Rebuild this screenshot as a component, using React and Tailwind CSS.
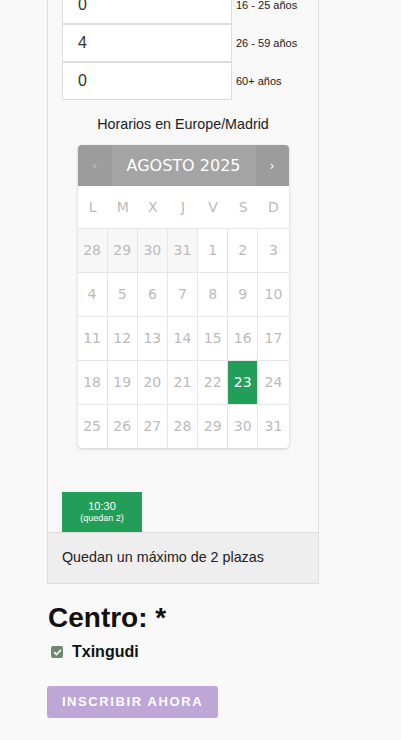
import React from 'react';

const cal = "'DejaVu Sans', Verdana, sans-serif";
const sans = "'Liberation Sans', Arial, sans-serif";

const ages = [
  { value: '0', label: '16 - 25 años' },
  { value: '4', label: '26 - 59 años' },
  { value: '0', label: '60+ años' },
];

const weeks = [
  [28, 29, 30, 31, 1, 2, 3],
  [4, 5, 6, 7, 8, 9, 10],
  [11, 12, 13, 14, 15, 16, 17],
  [18, 19, 20, 21, 22, 23, 24],
  [25, 26, 27, 28, 29, 30, 31],
];

const dow = ['L', 'M', 'X', 'J', 'V', 'S', 'D'];

const App = () => {
  return (
    <main className="flow-root min-h-screen bg-[#f9f9f9] text-[#222]" style={{ fontFamily: sans }}>
      {/* Panel de reserva */}
      <section className="-mt-[15px] ml-[47px] w-[272px] border border-[#dddddd] bg-[#f8f8f8]">
        <div className="px-[14px]">
          {ages.map((a, i) => (
            <div key={i} className="flex items-center">
              <input
                readOnly
                value={a.value}
                className="h-[38px] w-[170px] border border-[#dddddd] bg-white pl-[15px] text-[16px] text-[#333] outline-none"
                style={{ fontFamily: sans }}
              />
              <span className="ml-[4px] text-[11px] text-[#222]">{a.label}</span>
            </div>
          ))}
        </div>

        <p className="mt-[14px] text-center text-[14.3px] leading-[20px] text-[#222]">Horarios en Europe/Madrid</p>

        {/* Calendario */}
        <div
          className="mx-auto mt-[11px] w-[211px] overflow-hidden rounded-[4px] bg-white shadow-[0_1px_3px_rgba(0,0,0,0.18)]"
          style={{ fontFamily: cal }}
        >
          <div className="flex h-[41px] bg-[#9c9c9c] text-white">
            <div className="flex w-[34px] items-center justify-center text-[13px] text-[#c4c4c4]">‹</div>
            <div className="flex flex-1 items-center justify-center bg-[#a4a4a4] text-[16px]">AGOSTO 2025</div>
            <div className="flex w-[33px] items-center justify-center text-[13px]">›</div>
          </div>
          <div className="grid h-[43px] grid-cols-7 border-b border-[#e6e6e6]">
            {dow.map((d) => (
              <div key={d} className="flex items-center justify-center text-[14px] text-[#bbbbbb]">{d}</div>
            ))}
          </div>
          {weeks.map((w, r) => (
            <div key={r} className={`grid grid-cols-7 ${r < 4 ? 'h-[44px] border-b border-[#e6e6e6]' : 'h-[43px]'}`}>
              {w.map((d, c) => {
                const prev = r === 0 && c < 4;
                const sel = r === 3 && d === 23;
                return (
                  <div
                    key={c}
                    className={`flex items-center justify-center text-[14px] ${c < 6 ? 'border-r border-[#e6e6e6]' : ''} ${
                      sel ? 'bg-[#229e58] text-white' : prev ? 'bg-[#f7f7f7] text-[#bbbbbb]' : 'text-[#bbbbbb]'
                    }`}
                  >
                    {d}
                  </div>
                );
              })}
            </div>
          ))}
        </div>

        {/* Horario */}
        <div className="mt-[44px] px-[14px]">
          <button className="flex h-[40px] w-[80px] flex-col items-center justify-center bg-[#229e58] text-white">
            <span className="text-[11px] leading-[13px]">10:30</span>
            <span className="text-[9px] leading-[11px]">(quedan 2)</span>
          </button>
        </div>

        <div className="flex h-[51px] items-center border-t border-[#dddddd] bg-[#eeeeee] px-[14px] text-[14.3px] text-[#222]">
          Quedan un máximo de 2 plazas
        </div>
      </section>

      {/* Centro */}
      <h2 className="ml-[48px] mt-[18px] text-[28px] font-bold leading-[32px] text-[#111]">Centro: *</h2>
      <label className="ml-[51px] mt-[8px] flex h-[20px] items-center gap-[9px]">
        <span className="flex h-[12px] w-[12px] items-center justify-center rounded-[2px] bg-[#6e8a6e]">
          <svg width="9" height="9" viewBox="0 0 10 10" fill="none">
            <path d="M1.8 5.2 L4 7.3 L8.2 2.6" stroke="white" strokeWidth="1.8" strokeLinecap="round" strokeLinejoin="round" />
          </svg>
        </span>
        <span className="text-[16px] font-bold text-[#111]">Txingudi</span>
      </label>

      <button className="ml-[47px] mt-[24px] block h-[32px] w-[171px] rounded-[3px] bg-[#bea6d7] text-[13px] font-bold tracking-[1.6px] text-white">
        INSCRIBIR AHORA
      </button>
    </main>
  );
};

export default App;
